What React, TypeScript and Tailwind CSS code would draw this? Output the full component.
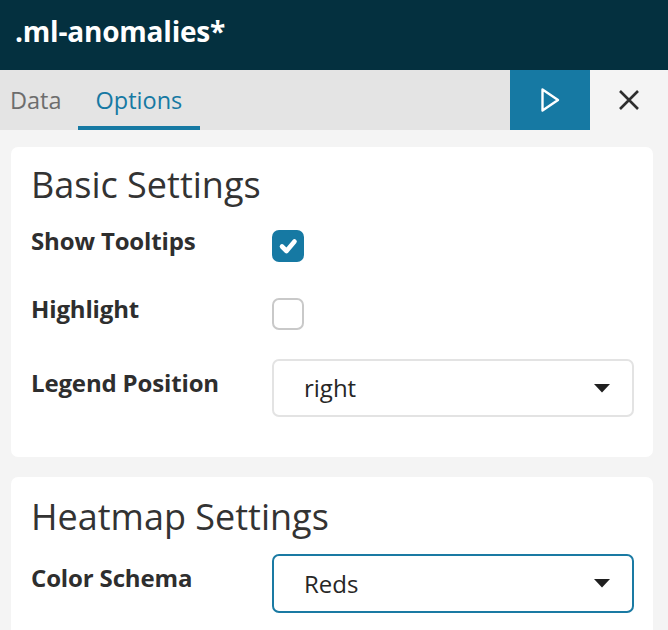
import React from "react";

const font = { fontFamily: '"Open Sans", "Noto Sans", sans-serif' };

function Caret() {
  return (
    <svg width="16" height="9" viewBox="0 0 16 9" className="shrink-0">
      <path d="M0 0 H16 L8 8.5 Z" fill="#1f1f1f" />
    </svg>
  );
}

function Select({ value, active }: { value: string; active?: boolean }) {
  return (
    <div
      className={
        active
          ? "flex h-[59px] w-[362px] items-center justify-between rounded-[7px] border-2 border-[#1a7aa3] bg-white pl-[30px] pr-[22px]"
          : "flex h-[58px] w-[362px] items-center justify-between rounded-[7px] border-2 border-[#e3e3e3] bg-white pl-[30px] pr-[22px]"
      }
    >
      <span className="text-[24px] leading-none text-[#262626]">{value}</span>
      <Caret />
    </div>
  );
}

function Checkbox({ checked }: { checked?: boolean }) {
  if (checked) {
    return (
      <div className="flex h-[32px] w-[32px] items-center justify-center rounded-[7px] bg-[#1679a3]">
        <svg width="32" height="32" viewBox="0 0 32 32">
          <path
            d="M10 16.5 L14.5 21 L22.5 11.5"
            fill="none"
            stroke="#fff"
            strokeWidth="4.6"
            strokeLinecap="round"
            strokeLinejoin="round"
          />
        </svg>
      </div>
    );
  }
  return <div className="h-[32px] w-[32px] rounded-[7px] border-2 border-[#c9c9c9] bg-white" />;
}

export default function App() {
  return (
    <div className="h-[630px] w-[668px] overflow-hidden bg-[#f4f4f4]" style={font}>
      <div className="h-[70px] bg-[#04303f] pl-[15px] pt-[17px]">
        <div className="text-[28px] font-bold leading-none tracking-[-0.2px] text-white">.ml-anomalies*</div>
      </div>
      <div className="flex h-[60px]">
        <div className="flex flex-1 bg-[#e4e4e4]">
          <div className="ml-[10px] pt-[19px] text-[23.5px] leading-none text-[#6d6d6d]">Data</div>
          <div className="ml-[16px] border-b-4 border-[#1679a3] px-[18px] pt-[19px] text-[23.5px] leading-none text-[#1679a3]">
            Options
          </div>
        </div>
        <div className="flex w-[80px] items-center justify-center bg-[#1679a3]">
          <svg width="26" height="26" viewBox="0 0 26 26">
            <path
              d="M5.5 2.5 L21 13 L5.5 23.5 Z"
              fill="none"
              stroke="#fff"
              strokeWidth="2.4"
              strokeLinejoin="round"
            />
          </svg>
        </div>
        <div className="flex w-[78px] items-center justify-center">
          <svg width="24" height="24" viewBox="0 0 24 24">
            <path d="M3 3 L21 21 M21 3 L3 21" stroke="#2e2e2e" strokeWidth="2.6" />
          </svg>
        </div>
      </div>

      <div className="ml-[11px] mr-[15px] mt-[17px] rounded-[7px] bg-white pb-[40px] pl-[20px] pt-[20px]">
        <div className="text-[36px] leading-none text-[#333333]">Basic Settings</div>
        <div className="mt-[27px] flex items-start">
          <div className="-mt-[1px] w-[241px] text-[24px] font-bold leading-none tracking-[-0.15px] text-[#2e2e2e]">Show Tooltips</div>
          <Checkbox checked />
        </div>
        <div className="mt-[36px] flex items-start">
          <div className="-mt-[1px] w-[241px] text-[24px] font-bold leading-none tracking-[-0.15px] text-[#2e2e2e]">Highlight</div>
          <Checkbox />
        </div>
        <div className="mt-[29px] flex items-start">
          <div className="mt-[12px] w-[241px] text-[24px] font-bold leading-none tracking-[-0.15px] text-[#2e2e2e]">Legend Position</div>
          <Select value="right" />
        </div>
      </div>

      <div className="ml-[11px] mr-[15px] mt-[20px] rounded-[7px] bg-white pb-[40px] pl-[20px] pt-[22px]">
        <div className="text-[36px] leading-none text-[#333333]">Heatmap Settings</div>
        <div className="mt-[19px] flex items-start">
          <div className="mt-[12px] w-[241px] text-[24px] font-bold leading-none tracking-[-0.15px] text-[#2e2e2e]">Color Schema</div>
          <Select value="Reds" active />
        </div>
      </div>
    </div>
  );
}
